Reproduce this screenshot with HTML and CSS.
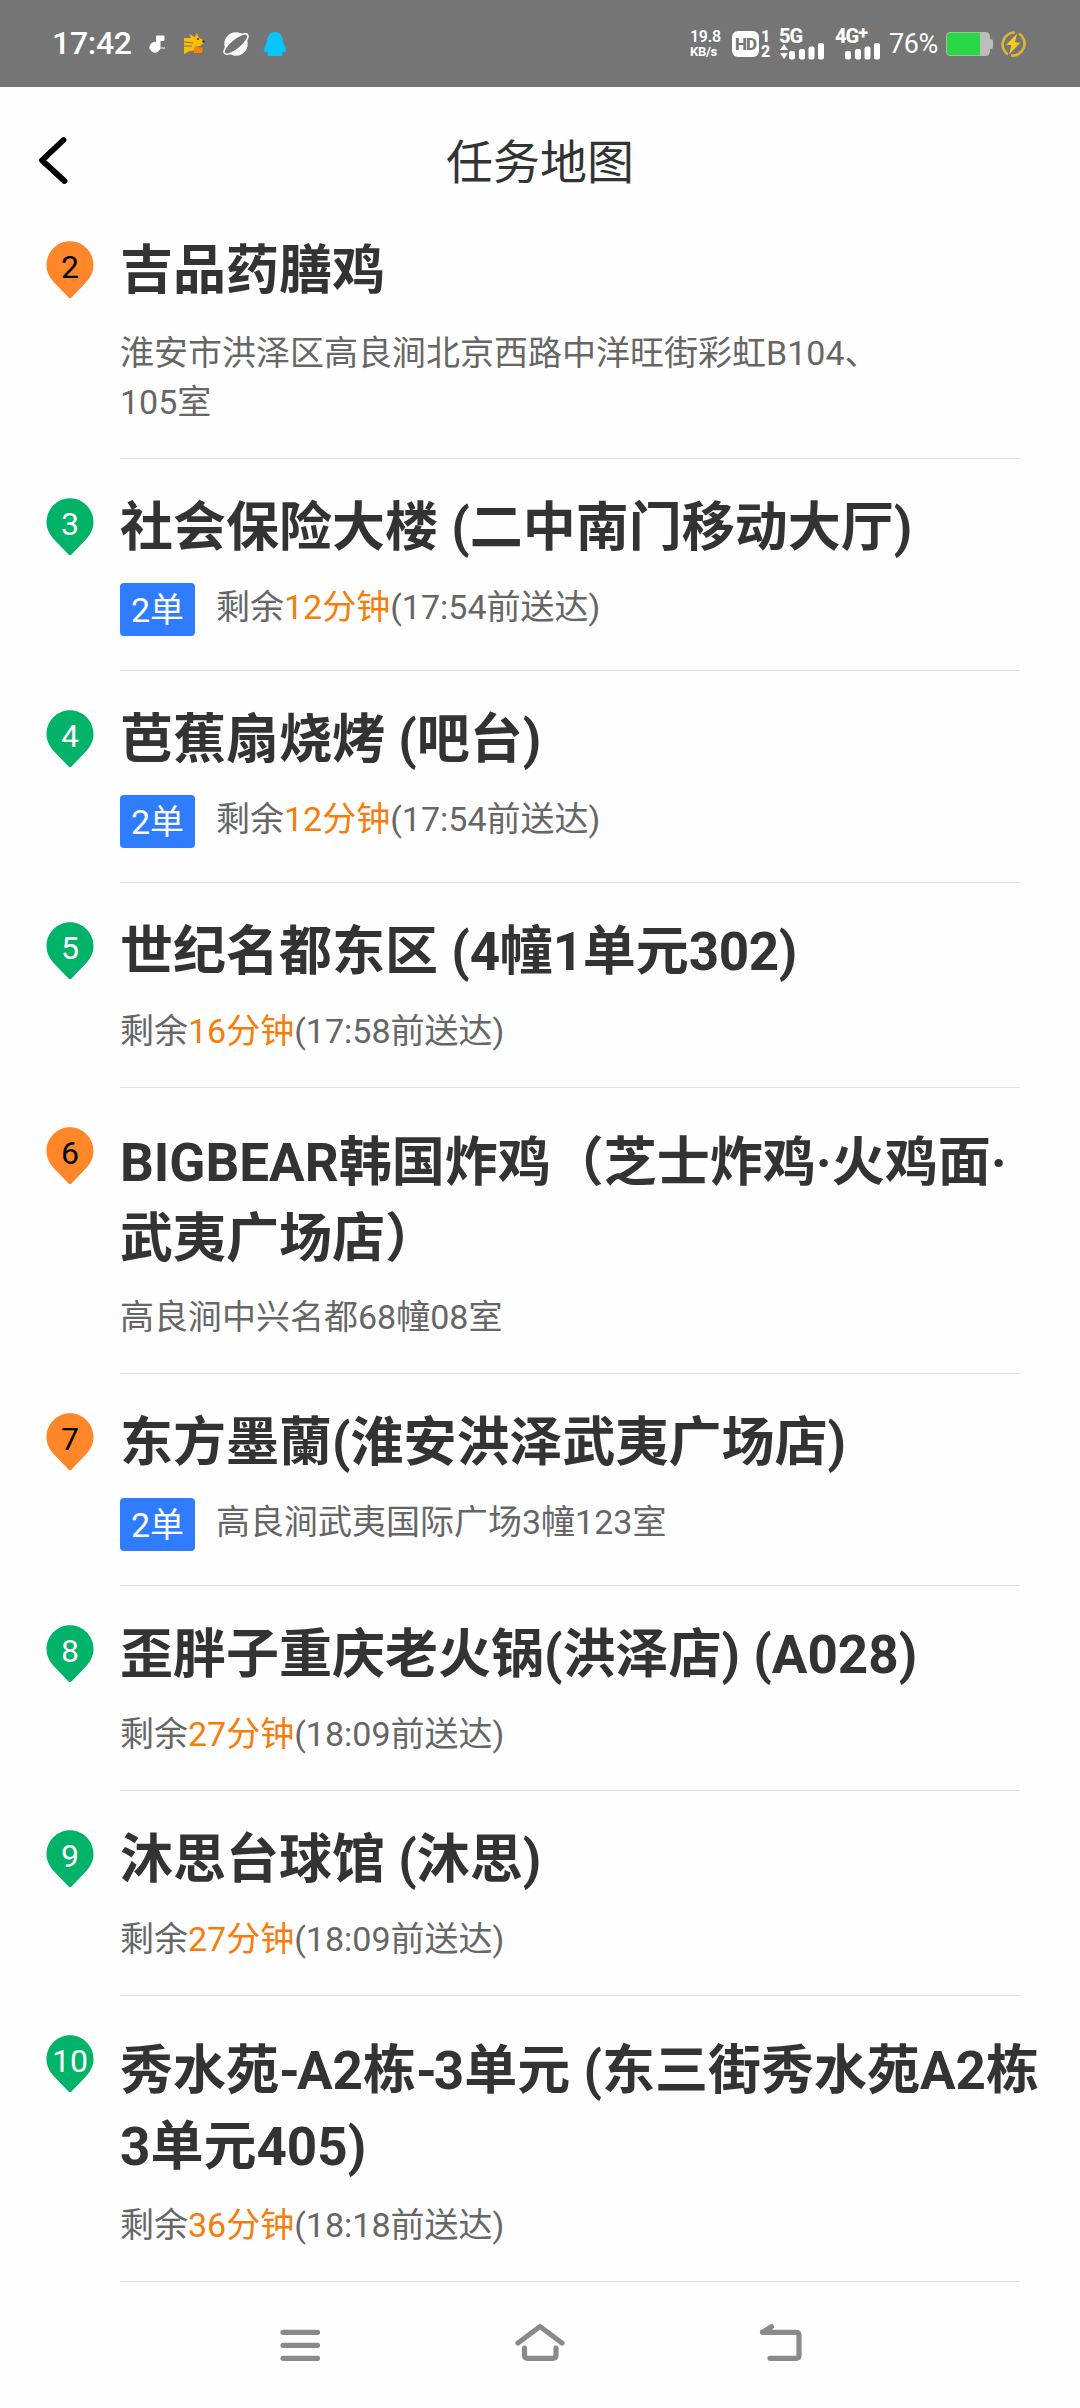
FILE: index.html
```
<!DOCTYPE html>
<html lang="zh-CN">
<head>
<meta charset="utf-8">
<title>任务地图</title>
<link rel="stylesheet" href="styles.css">
</head>
<body>
<svg class="defs" width="0" height="0"><defs>
<symbol id="pin" viewBox="0 0 48 58"><path d="M24 .3C11 .3.5 11 .5 24.200C.5 32 4.500 38 10.500 44L22.500 56.500Q24 58 25.500 56.500L37.500 44C43.500 38 47.500 32 47.500 24.200C47.500 11 37 .3 24 .3Z" fill="currentColor"/></symbol>
</defs></svg>
<div class="status">
  <span class="clock">17:42</span>
  <div class="apps">
    <svg width="18" height="24" viewBox="0 0 18 24"><path d="M8.500 4h7.500v4.500h-4v6.500a5 5 0 1 1-3.500-4.500Z" fill="#fff" stroke="#fff"/><path d="M1 16h16" stroke="#fff" stroke-width="1"/></svg>
    <svg width="22" height="24" viewBox="0 0 22 24"><path d="M1 6h7l-2-4 6 3 2-4 2 5q5 1 5 5l-4 3-6 1 6 1-1 2-9 1-6 3H1Z" fill="#fcbd08"/><path d="M1 10l9 1M1 14l8 0" stroke="#757575" stroke-width="1"/><path d="M11 15.500h9l-1 5.500h-8Z" fill="#fb830c"/><circle cx="15" cy="7" r="1" fill="#333"/><circle cx="20.500" cy="9.500" r="1.200" fill="#333"/></svg>
    <svg width="28" height="26" viewBox="0 0 28 26"><circle cx="14" cy="13" r="11.700" fill="#fff"/><ellipse cx="14" cy="13" rx="14.800" ry="5.200" transform="rotate(-39 14 13)" fill="#757575" stroke="#fff" stroke-width="1.600"/></svg>
    <svg width="24" height="26" viewBox="0 0 24 26"><path d="M12 1C7 1 4.500 5 4 10C3.800 13 1 16 .8 20c0 1.500 1.500 1.500 3 .5l1.200 2-.5 2.500h15l-.5-2.500 1.200-2c1.500 1 3 1 3-.5C23 16 20.200 13 20 10C19.500 5 17 1 12 1Z" fill="#08c6fd"/></svg>
  </div>
  <div class="rate"><span>19.8</span><span>KB/s</span></div>
  <div class="hd"><span class="hd-box">HD</span><span class="sims"><span>1</span><span>2</span></span></div>
  <div class="signal s5"><span>5G</span><svg width="46" height="17" viewBox="0 0 46 17"><g fill="#fff"><path d="M1 7l4-6 4 6ZM1 10h8l-4 6Z"/><rect x="10" y="8" width="6" height="8.500" rx="2"/><rect x="20" y="6" width="6" height="10.500" rx="2"/><rect x="29.500" y="3.500" width="6" height="13" rx="2"/><rect x="39" y="0" width="6" height="16.500" rx="2"/></g></svg></div>
  <div class="signal s4"><span>4G<sup>+</sup></span><svg width="46" height="17" viewBox="0 0 46 17"><g fill="#fff"><rect x="10" y="8" width="6" height="8.500" rx="2"/><rect x="20" y="6" width="6" height="10.500" rx="2"/><rect x="29.500" y="3.500" width="6" height="13" rx="2"/><rect x="39" y="0" width="6" height="16.500" rx="2"/></g></svg></div>
  <span class="percent">76%</span>
  <svg class="battery" width="48" height="24" viewBox="0 0 48 24"><path d="M5 0H39Q44 0 44 5V7Q47 7 47 9V15Q47 17 44 17V19Q44 24 39 24H5Q0 24 0 19V5Q0 0 5 0Z" fill="#bdbdbd"/><path d="M34 .8H5Q.8 .8 .8 5V19Q.8 23.200 5 23.200H34Z" fill="#27d844"/></svg>
  <svg class="bolt" width="28" height="28" viewBox="0 0 28 28"><path d="M16 2.500A12 12 0 0 0 9 24.500M20 3.500A12 12 0 0 1 12 25.500" fill="none" stroke="#e0b52c" stroke-width="2.600"/><path d="M19 2L6 15.500h6L9 26L22.500 12h-6Z" fill="#fbc81c" stroke="#757575" stroke-width="1"/></svg>
</div>
<header class="header">
  <svg class="back" width="48" height="60" viewBox="0 0 48 60"><path d="M35.500 10L14 30.300L36.500 51" fill="none" stroke="#000" stroke-width="5.800" stroke-linecap="round" stroke-linejoin="round"/></svg>
  <h1>任务地图</h1>
</header>
<main class="list">
  <section class="stop pickup first"><div class="pin"><svg><use href="#pin"/></svg><span>2</span></div><div class="body"><h2>吉品药膳鸡</h2><div class="info tall"><p>淮安市洪泽区高良涧北京西路中洋旺街彩虹B104、<br>105室</p></div></div></section>
  <section class="stop"><div class="pin"><svg><use href="#pin"/></svg><span>3</span></div><div class="body"><h2>社会保险大楼 (二中南门移动大厅)</h2><div class="info"><span class="badge">2单</span><p>剩余<em>12分钟</em>(17:54前送达)</p></div></div></section>
  <section class="stop"><div class="pin"><svg><use href="#pin"/></svg><span>4</span></div><div class="body"><h2>芭蕉扇烧烤 (吧台)</h2><div class="info"><span class="badge">2单</span><p>剩余<em>12分钟</em>(17:54前送达)</p></div></div></section>
  <section class="stop"><div class="pin"><svg><use href="#pin"/></svg><span>5</span></div><div class="body"><h2>世纪名都东区 (<span class="num">4</span>幢<span class="num">1</span>单元<span class="num">302</span>)</h2><div class="info"><p>剩余<em>16分钟</em>(17:58前送达)</p></div></div></section>
  <section class="stop pickup"><div class="pin"><svg><use href="#pin"/></svg><span>6</span></div><div class="body"><h2 class="long">BIGBEAR韩国炸鸡（芝士炸鸡·火鸡面·<br>武夷广场店）</h2><div class="info"><p>高良涧中兴名都68幢08室</p></div></div></section>
  <section class="stop pickup"><div class="pin"><svg><use href="#pin"/></svg><span>7</span></div><div class="body"><h2>东方墨蘭(淮安洪泽武夷广场店)</h2><div class="info"><span class="badge">2单</span><p>高良涧武夷国际广场3幢123室</p></div></div></section>
  <section class="stop"><div class="pin"><svg><use href="#pin"/></svg><span>8</span></div><div class="body"><h2>歪胖子重庆老火锅(洪泽店) (A028)</h2><div class="info"><p>剩余<em>27分钟</em>(18:09前送达)</p></div></div></section>
  <section class="stop"><div class="pin"><svg><use href="#pin"/></svg><span>9</span></div><div class="body"><h2>沐思台球馆 (沐思)</h2><div class="info"><p>剩余<em>27分钟</em>(18:09前送达)</p></div></div></section>
  <section class="stop"><div class="pin"><svg><use href="#pin"/></svg><span>10</span></div><div class="body"><h2 class="long">秀水苑<span class="dash">-</span>A2栋<span class="dash">-</span>3单元 (东三街秀水苑A2栋<br>3单元405)</h2><div class="info"><p>剩余<em>36分钟</em>(18:18前送达)</p></div></div></section>
</main>
<nav class="nav">
  <svg width="60" height="60" viewBox="0 0 60 60"><path d="M13 17.300H47.500M13 30.300H47.500M13 43.300H47.500"/></svg>
  <svg width="60" height="60" viewBox="0 0 60 60"><path d="M8 28L30 11.500L52 28M14.500 33V40Q14.500 43.300 18 43.300H42.500Q46 43.300 46 40V33"/></svg>
  <svg width="60" height="60" viewBox="0 0 60 60"><path d="M21.500 11.800L12.500 17.300H46Q49 17.300 49 20.300V40.300Q49 43.300 46 43.300H20"/></svg>
</nav>
</body>
</html>
```
FILE: styles.css
```
* { box-sizing: border-box; margin: 0; padding: 0; }
body {
  width: 1080px;
  height: 2408px;
  overflow: hidden;
  display: flex;
  flex-direction: column;
  background: #fefefe;
  color: #333;
  font-family: Roboto, "Noto Sans CJK SC", sans-serif;
}
.defs { position: absolute; }
svg { display: block; flex: none; }

.status {
  height: 87px;
  flex: none;
  display: flex;
  align-items: center;
  padding-left: 52px;
  background: #757575;
  color: #fff;
}
.clock { width: 96px; font-size: 32px; font-weight: 500; line-height: 38px; letter-spacing: -0.3px; margin-bottom: 1px; }
.apps { width: 542px; display: flex; align-items: center; }
.apps svg:nth-child(2) { margin-left: 17px; }
.apps svg:nth-child(3) { margin-left: 17px; }
.apps svg:nth-child(4) { margin-left: 13px; }
.rate { width: 42px; font-size: 16px; font-weight: 600; line-height: 15px; display: flex; flex-direction: column; letter-spacing: -0.3px; }
.rate span + span { font-size: 13px; font-weight: 700; }
.hd { width: 47px; display: flex; gap: 2px; align-items: center; }
.hd-box {
  width: 27px;
  height: 26px;
  border-radius: 6px;
  background: #fff;
  color: #757575;
  font-size: 17px;
  font-weight: 800;
  line-height: 27px;
  text-align: center;
  letter-spacing: -1px;
}
.sims { display: flex; flex-direction: column; font-size: 16px; font-weight: 800; line-height: 15px; }
.signal { height: 32px; display: flex; flex-direction: column; font-size: 20px; font-weight: 800; line-height: 17px; letter-spacing: -1px; }
.signal span { height: 15px; white-space: nowrap; }
.signal sup { font-size: 18px; line-height: 0; vertical-align: 4px; }
.s5 { width: 56px; }
.s4 { width: 54px; }
.percent { width: 57px; font-size: 27px; line-height: 32px; letter-spacing: -0.4px; }
.bolt { margin-left: 5px; }

.header { height: 114px; flex: none; display: flex; align-items: center; padding: 0 28px; }
.back { margin-top: 31px; }
.header h1 { flex: 1; margin: 37px 48px 0 0; font-size: 47px; font-weight: 400; line-height: 60px; text-align: center; }

.list { flex: none; }
.stop { display: flex; padding-left: 46px; color: #00b368; }
.pickup { color: #ff8629; }
.pin { width: 74px; flex: none; padding-top: 39px; display: grid; align-content: start; }
.pin svg { grid-area: 1 / 1; width: 48px; height: 58px; }
.pin span { grid-area: 1 / 1; width: 48px; color: #fff; font-size: 32px; line-height: 52px; text-align: center; }
.pickup .pin span { color: #000; }
.body { width: 900px; padding: 42px 0 34px; border-bottom: 1px solid #e2e2e2; color: #666; white-space: nowrap; }
.first .body { padding: 43px 0 31px; }
.first .pin { padding-top: 40px; }
.body h2 { height: 54px; margin-bottom: 28px; color: #333; font-size: 53px; font-weight: 700; line-height: 54px; }
.body h2.long { height: 152px; margin: -5px 0 16px; line-height: 76px; }
.num { letter-spacing: -0.4px; }
.dash { letter-spacing: -3px; }
.info { display: flex; font-size: 34px; line-height: 48px; height: 46px; }
.info:has(.badge) { height: 53px; }
.info.tall { height: 101px; padding-top: 3px; line-height: 49px; }
.info em { color: #f77c0a; font-style: normal; }
.badge { width: 75px; height: 53px; margin-right: 21px; border-radius: 4px; background: #2f7cff; color: #fff; line-height: 55px; text-align: center; }

.nav { flex: 1; display: flex; justify-content: center; gap: 180px; padding-top: 33px; }
.nav path { fill: none; stroke: #8a8a8a; stroke-width: 5.2; stroke-linecap: round; stroke-linejoin: round; }
```
